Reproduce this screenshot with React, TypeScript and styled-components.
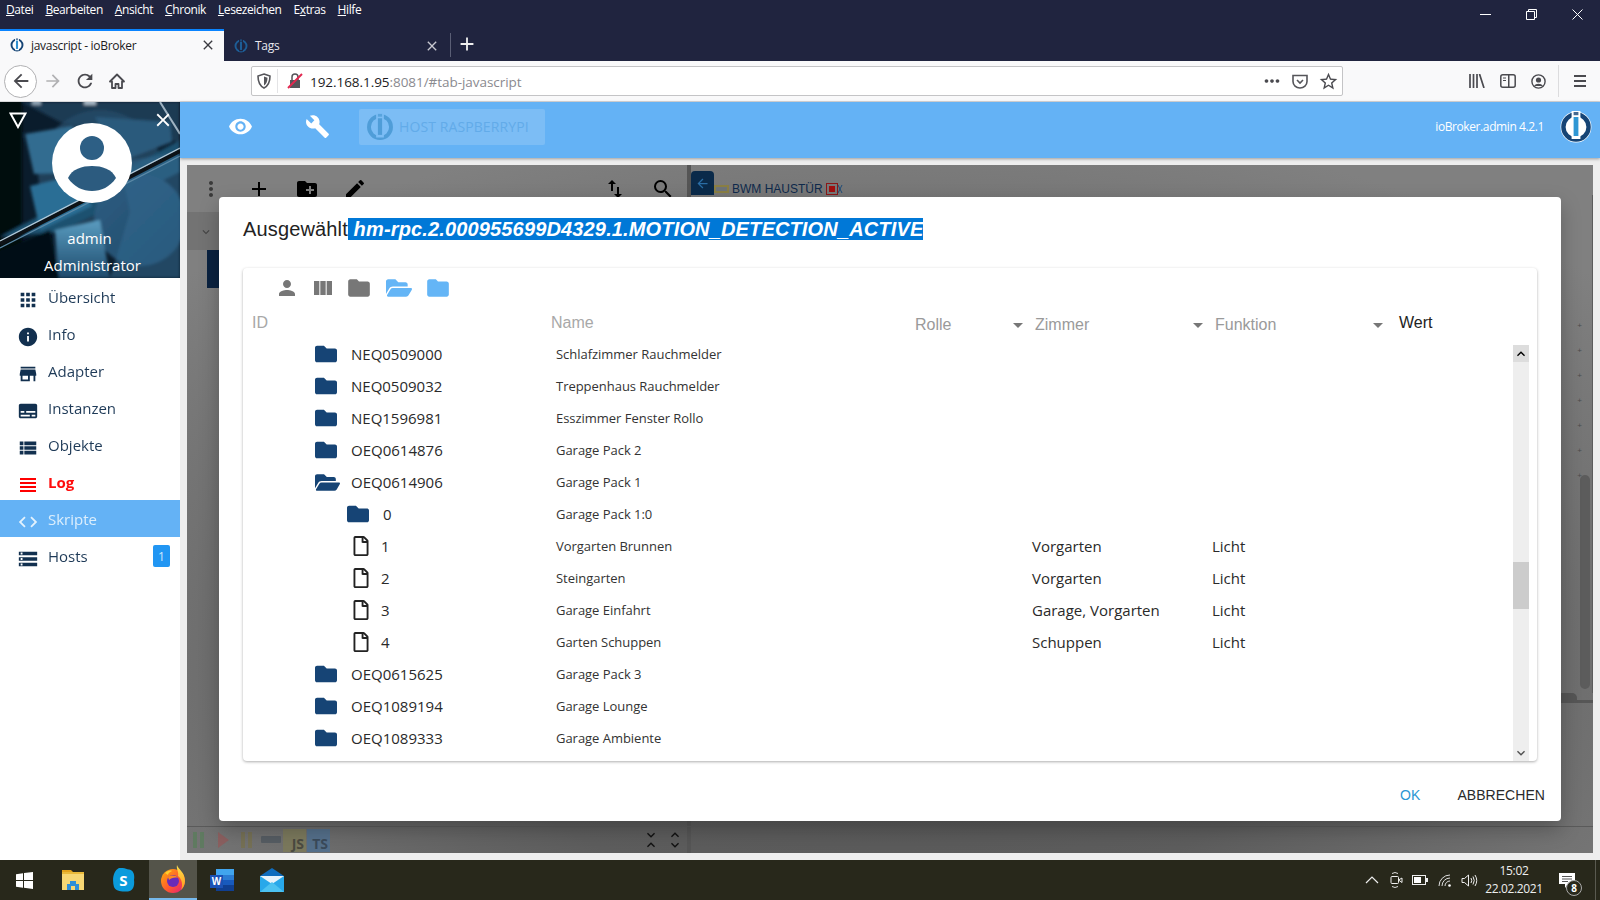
import React from "react";
import styled, { createGlobalStyle } from "styled-components";
import {
  MdApps, MdInfo, MdStore, MdSubtitles, MdViewList, MdCode, MdStorage, MdVisibility, MdBuild,
  MdAdd, MdCreateNewFolder, MdEdit, MdSearch, MdPerson, MdViewColumn, MdFolder, MdArrowDropDown,
  MdExpandMore, MdExpandLess, MdMoreVert, MdImportExport, MdClose, MdArrowBack, MdArrowForward, MdRefresh, MdMoreHoriz, MdStarBorder,
} from "react-icons/md";
import { FaFolder, FaFolderOpen, FaRegFile } from "react-icons/fa";

const Global = createGlobalStyle`
  html, body { margin: 0; padding: 0; width: 1600px; height: 900px; overflow: hidden; background: #eee; }
  * { box-sizing: border-box; }
  #root { width: 1600px; height: 900px; }
`;
const ui = `"Open Sans", "Noto Sans", sans-serif`;
const arial = `"Liberation Sans", Arial, sans-serif`;

const Page = styled.div`display:flex;flex-direction:column;width:1600px;height:900px;overflow:hidden;font-family:${ui};`;

/* ---------- browser chrome ---------- */
const TitleBar = styled.header`background:#20243f;height:61px;flex:none;display:flex;flex-direction:column;`;
const MenuRow = styled.div`height:29px;display:flex;align-items:flex-start;padding-left:6px;`;
const MenuItem = styled.span`font-size:12px;line-height:20px;color:#fff;margin-right:12px;letter-spacing:-.41px;`;
const WinControls = styled.div`margin-left:auto;display:flex;`;
const WinButton = styled.div`width:46px;height:28px;display:flex;align-items:center;justify-content:center;`;
const TabRow = styled.div`height:32px;display:flex;align-items:stretch;`;
const Tab = styled.div<{ $active?: boolean }>`
  width:${p => (p.$active ? 224 : 226)}px;display:flex;align-items:center;padding:${p => (p.$active ? "0 8px 2px 10px" : "1px 10px 0 10px")};
  background:${p => (p.$active ? "#f9f9fa" : "transparent")};
  border-top:${p => (p.$active ? "2px solid #0a84ff" : "0")};
  color:${p => (p.$active ? "#1c1b22" : "#e8e8ee")};
`;
const TabTitle = styled.span`font-size:12px;margin-left:7px;flex:1;letter-spacing:-.3px;`;
const TabSep = styled.div`width:1px;height:24px;background:#5a5e75;align-self:center;`;
const NewTab = styled.div`width:32px;display:flex;align-items:center;justify-content:center;color:#eee;padding-bottom:2px;`;

const NavBar = styled.nav`height:41px;flex:none;background:#f9f9fa;border-bottom:1px solid #d8d8da;display:flex;align-items:center;padding-left:4px;color:#4a4a4f;`;
const BackCircle = styled.div`width:33px;height:33px;border-radius:50%;border:1px solid #b1b1b3;background:#fff;display:flex;align-items:center;justify-content:center;flex:none;`;
const NavSlot = styled.div<{ $dim?: boolean; $w?: number }>`width:${p => p.$w || 32}px;height:32px;display:flex;align-items:center;justify-content:center;flex:none;color:${p => (p.$dim ? "#b1b1b3" : "#4a4a4f")};`;
const UrlBar = styled.div`margin-left:118px;width:1092px;height:30px;background:#fff;border:1px solid #c4c4c6;border-radius:2px;display:flex;align-items:center;padding-left:5px;flex:none;`;
const UrlSep = styled.div`width:1px;height:24px;background:#e4e4e6;margin:0 6px 0 6px;`;
const UrlText = styled.span`font-size:13.5px;color:#8a8a8f;margin-left:7px;letter-spacing:-.05px;flex:1;padding-top:2px;`;
const UrlHost = styled.span`color:#1c1b22;`;
const ChromeSep = styled.div`width:1px;height:32px;background:#dcdcde;margin:0 5px 0 4px;`;

/* ---------- app frame ---------- */
const Body = styled.div`flex:1;display:flex;min-height:0;`;
const Sidebar = styled.aside`width:180px;flex:none;background:#fff;display:flex;flex-direction:column;`;
const Hero = styled.div`position:relative;height:176px;display:flex;flex-direction:column;align-items:center;color:#fff;overflow:hidden;background:#06121e;`;
const HeroArt = styled.svg`position:absolute;inset:0;`;
const HeroTop = styled.div`position:relative;width:100%;height:100px;display:flex;justify-content:center;padding:21px 0 0 4px;`;
const HeroTriangle = styled.svg`position:absolute;left:9px;top:10px;`;
const HeroClose = styled.div`position:absolute;right:6px;top:7px;color:#fff;display:flex;`;
const HeroName = styled.div`position:relative;font-size:15px;line-height:27px;margin-top:23px;margin-left:-1px;`;
const HeroRole = styled.div`position:relative;font-size:15px;line-height:26px;margin-left:5px;`;
const MenuList = styled.ul`list-style:none;margin:0;padding:0;`;
const MenuRowItem = styled.li<{ $active?: boolean; $red?: boolean }>`
  height:37px;display:flex;align-items:center;position:relative;padding-left:17px;
  background:${p => (p.$active ? "#64b2f5" : "transparent")};
  color:${p => (p.$active ? "#e3f2fd" : p.$red ? "#f00" : "#12304f")};
`;
const MenuIcon = styled.span`width:22px;height:22px;display:flex;align-items:center;justify-content:center;margin-top:7px;flex:none;`;
const MenuLabel = styled.span<{ $bold?: boolean }>`margin-left:9px;font-size:15px;margin-top:1px;font-weight:${p => (p.$bold ? 700 : 400)};color:inherit;opacity:.95;`;
const Badge = styled.span`position:absolute;left:153px;top:8px;width:17px;height:22px;background:#2196f3;border-radius:2px;color:#cfe8fc;font-size:12px;display:flex;align-items:center;justify-content:center;`;

const Main = styled.main`flex:1;display:flex;flex-direction:column;background:#eee;min-width:0;`;
const AppHeader = styled.div`height:56px;flex:none;background:#64b2f5;box-shadow:0 1px 3px rgba(0,0,0,.35);display:flex;align-items:center;color:#fff;position:relative;padding:0 8px 7px 0;`;
const HeaderSlot = styled.div<{ $ml: number }>`width:48px;display:flex;justify-content:center;margin-left:${p => p.$ml}px;`;
const HostBox = styled.div`margin-left:18px;width:186px;height:36px;background:#7cbdf5;border-radius:2px;display:flex;align-items:center;padding-left:7px;`;
const HostText = styled.span`font-size:14px;color:#62abe9;margin-left:5px;letter-spacing:.1px;white-space:nowrap;`;
const Version = styled.span`margin-left:auto;margin-right:16px;font-size:12px;color:#fff;letter-spacing:-.4px;`;

const Content = styled.div`flex:1;padding:7px;min-height:0;`;
const ScriptArea = styled.section`
  position:relative;height:100%;display:flex;flex-direction:column;overflow:hidden;color:#000;
  background:radial-gradient(ellipse 70% 80% at 50% 72%, #555 0%, #5d5d5d 45%, #727272 75%, #808080 100%);
`;
const Upper = styled.div`flex:1;display:flex;min-height:0;`;
const LeftPane = styled.div`width:500px;flex:none;display:flex;flex-direction:column;`;
const ToolRow = styled.div`height:47px;display:flex;align-items:center;padding-left:8px;flex:none;`;
const ToolSlot = styled.div<{ $w: number; $ml?: number }>`width:${p => p.$w}px;margin-left:${p => p.$ml || 0}px;display:flex;justify-content:center;color:#000;`;
const Band = styled.div`height:38px;background:rgba(0,0,0,.1);padding:2px 0 0 12px;display:flex;align-items:center;flex:none;color:#444;`;
const ListStub = styled.div`width:24px;height:38px;margin-left:20px;background:#0a2240;flex:none;`;
const Splitter = styled.div`width:4px;background:#555;flex:none;`;
const RightPane = styled.div`flex:1;display:flex;flex-direction:column;min-width:0;`;
const EditorTabs = styled.div`height:30px;display:flex;align-items:flex-end;flex:none;`;
const BackTab = styled.div`width:23px;height:24px;background:#0a2a4a;border-radius:4px 4px 0 0;display:flex;align-items:center;justify-content:center;color:#2a6ea6;flex:none;`;
const DeviceTitle = styled.span`font-family:${arial};font-size:12px;color:#0f2a4c;margin:0 0 -1px 0;white-space:nowrap;display:flex;align-items:center;gap:3px;`;
const Editor = styled.div`flex:1;display:flex;justify-content:flex-end;min-height:0;position:relative;`;
const Gutter = styled.div`width:32px;display:flex;flex-direction:column;align-items:flex-end;padding-right:1px;border-right:1px solid #5c5c5c;`;
const GutterMarks = styled.div`margin-top:118px;width:100%;display:flex;flex-direction:column;align-items:flex-end;padding-right:9px;`;
const GutterMark = styled.span`font-size:8px;line-height:25px;height:25px;color:#4c4c4c;font-family:${arial};`;
const GutterThumb = styled.div`position:absolute;right:3px;top:280px;width:10px;height:214px;background:#5c5c5c;border-radius:5px;`;
const PanelEdge = styled.div`height:10px;flex:none;display:flex;flex-direction:column;align-items:flex-start;`;
const PanelTab = styled.div`height:7px;width:calc(100% - 16px);background:#555;border-radius:0 5px 0 0;`;
const PanelLine = styled.div`height:3px;width:100%;background:#565656;`;
const Lower = styled.div`height:123px;flex:none;`;
const BottomBar = styled.div`height:27px;flex:none;display:flex;border-top:1px solid #5a5a5a;align-items:stretch;`;
const BottomLeft = styled.div`width:500px;flex:none;display:flex;align-items:center;`;
const Glyph = styled.div`width:24px;display:flex;justify-content:center;`;
const Lang = styled.span<{ $bg: string; $fg: string }>`width:23px;height:23px;margin-right:1px;background:${p => p.$bg};color:${p => p.$fg};font:700 14px/1 ${ui};display:flex;align-items:flex-end;justify-content:flex-end;padding:0 2px 1px 0;`;
const Stepper = styled.div`margin-left:auto;display:flex;gap:0;`;
const StepCol = styled.div`width:24px;display:flex;flex-direction:column;align-items:center;color:#111;`;
const BottomSplit = styled.div`width:4px;background:#555;`;

/* ---------- dialog ---------- */
const Dialog = styled.div`
  position:absolute;left:32px;top:32px;width:1342px;height:624px;background:#fff;border-radius:4px;
  display:flex;flex-direction:column;padding:21px 24px 0;box-shadow:0 8px 20px rgba(0,0,0,.25);
`;
const DialogTitle = styled.h2`margin:0;height:22px;display:flex;align-items:center;font:400 20px/22px ${arial};color:#222;letter-spacing:.15px;white-space:pre;flex:none;`;
const Selected = styled.span`background:#0078d7;color:#fff;font-weight:700;font-style:italic;height:22px;line-height:22px;letter-spacing:.15px;`;
const Card = styled.div`margin-top:28px;height:493px;border-radius:4px;box-shadow:0 1px 3px rgba(0,0,0,.32);display:flex;flex-direction:column;flex:none;overflow:hidden;position:relative;`;
const CardTools = styled.div`height:36px;display:flex;align-items:center;padding:4px 0 0 26px;flex:none;`;
const CardTool = styled.div<{ $w: number; $color: string }>`width:${p => p.$w}px;display:flex;justify-content:center;color:${p => p.$color};`;
const HeaderRow = styled.div`height:41px;display:grid;grid-template-columns:299px 364px 120px 180px 180px 1fr;padding:0 0 2px 9px;align-items:center;flex:none;font:16px ${arial};`;
const HeadCell = styled.span<{ $dark?: boolean }>`color:${p => (p.$dark ? "#222" : "#a8a8a8")};margin:-2px 0 0 ${p => (p.$dark ? 4 : 0)}px;`;
const FilterCell = styled.div`display:flex;align-items:center;justify-content:space-between;color:#9a9a9a;font:16px ${arial};padding-right:10px;margin-top:2px;`;
const FilterArrow = styled.span`display:flex;color:#777;`;
const ListWrap = styled.div`flex:1;display:flex;min-height:0;`;
const List = styled.div`flex:1;overflow:hidden;margin-top:-7px;height:430px;`;
const Row = styled.div`height:32px;display:grid;grid-template-columns:313px 476px 180px 1fr;align-items:center;`;
const IdCell = styled.div<{ $level: number }>`display:flex;align-items:center;padding-left:${p => (p.$level === 2 ? 104 : 72)}px;font-size:15px;color:#2a2a2a;`;
const RowIcon = styled.span<{ $file?: boolean }>`display:flex;width:${p => (p.$file ? 30 : 36)}px;margin-left:${p => (p.$file ? 4 : 0)}px;color:${p => (p.$file ? "#222" : "#164475")};flex:none;`;
const NameCell = styled.div`font-size:13px;color:#333;letter-spacing:-.03px;`;
const PlainCell = styled.div`font-size:15px;color:#2a2a2a;`;
const Scroller = styled.div`width:16px;margin-right:8px;background:#eee;position:relative;display:flex;flex-direction:column;justify-content:space-between;flex:none;`;
const ScrollBtn = styled.div<{ $shade?: boolean }>`height:17px;display:flex;align-items:center;justify-content:center;background:${p => (p.$shade ? "#ddd" : "transparent")};color:${p => (p.$shade ? "#000" : "#505050")};`;
const ScrollThumb = styled.div`position:absolute;left:0;right:0;top:217px;height:47px;background:#ccc;`;
const Footer = styled.div`display:flex;justify-content:flex-end;align-items:center;height:36px;margin-top:16px;margin-right:-8px;font:14px ${arial};`;
const FootBtn = styled.span<{ $primary?: boolean }>`color:${p => (p.$primary ? "#2b97d4" : "#2a2a2a")};margin-left:${p => (p.$primary ? 0 : 37)}px;letter-spacing:.05px;`;

/* ---------- taskbar ---------- */
const TaskBar = styled.footer`height:40px;flex:none;background:#28281b;display:flex;align-items:stretch;position:relative;color:#fff;`;
const TaskSlot = styled.div<{ $active?: boolean; $w: number }>`
  width:${p => p.$w}px;display:flex;align-items:center;justify-content:center;
  background:${p => (p.$active ? "#54544a" : "transparent")};
  border-bottom:${p => (p.$active ? "2px solid #76b9ed" : "0")};
`;
const Tray = styled.div`margin-left:auto;display:flex;align-items:center;padding-right:4px;`;
const TraySlot = styled.div<{ $w: number }>`width:${p => p.$w}px;display:flex;justify-content:center;align-items:center;`;
const Clock = styled.div`width:72px;margin-left:-2px;text-align:center;font-size:12px;line-height:18px;color:#eee;letter-spacing:-.35px;`;
const Notify = styled.div`position:relative;width:49px;height:40px;margin-left:-3px;border-right:1px solid #5a5a50;display:flex;align-items:center;padding-left:12px;`;
const NotifyBadge = styled.span`position:absolute;left:19px;top:20px;width:16px;height:16px;border-radius:50%;background:#28281b;border:1px solid #aaa;color:#fff;font-size:10px;font-weight:700;display:flex;align-items:center;justify-content:center;`;
const SkypeS = styled.span`font:700 15px/1 ${ui};color:#fff;position:absolute;`;
const IconBox = styled.div`position:relative;display:flex;align-items:center;justify-content:center;`;
const WordW = styled.span`position:absolute;left:0;top:6px;width:13px;height:13px;background:#1b52b5;color:#fff;font:700 10px/13px ${arial};text-align:center;`;

/* ---------- drawings ---------- */
const Logo = ({ size, ring, bar, bg }: { size: number; ring: string; bar: string; bg: string }) => (
  <svg width={size} height={size} viewBox="0 0 32 32">
    <circle cx="16" cy="16" r="15.4" fill={bg} />
    <circle cx="16" cy="16" r="12.6" fill="none" stroke={ring} strokeWidth="4.4" />
    <rect x="11.6" y="0" width="8.8" height="28" fill={bg} />
    <rect x="13.6" y="6" width="4.8" height="19" fill={bar} />
    <rect x="13.6" y="1" width="4.8" height="3.2" fill={ring} opacity=".8" />
  </svg>
);

const HeroPicture = () => (
  <HeroArt width="180" height="176" viewBox="0 0 180 176">
    <defs>
      <linearGradient id="fin" x1="0" y1="0" x2="0" y2="1"><stop offset="0" stopColor="#5a9cc0" /><stop offset="1" stopColor="#1d4a6c" /></linearGradient>
      <linearGradient id="disk" x1="0" y1="0" x2="1" y2="1"><stop offset="0" stopColor="#2f5f83" /><stop offset="1" stopColor="#1d4767" /></linearGradient>
      <filter id="soft"><feGaussianBlur stdDeviation="1.6" /></filter>
    </defs>
    <rect width="180" height="176" fill="#0a1c2c" />
    <g filter="url(#soft)">
      <rect x="-4" y="-4" width="26" height="184" fill="#03090f" />
      <path d="M22 0H180V40L60 20Z" fill="#1d3a52" />
      <circle cx="100" cy="70" r="62" fill="#264c6a" opacity=".75" />
      <path d="M25 32L72 24L98 70L34 72Z" fill="#336c90" />
      <path d="M95 15L170 20L172 40L120 60Z" fill="#2a5a7c" />
      <rect x="32" y="-3" width="9" height="6" fill="#8ea2b2" />
      <rect x="84" y="-3" width="12" height="6" fill="#a5b6c3" />
      <path d="M0 135L180 38V70L60 130Z" fill="#1e5170" />
      <circle cx="140" cy="118" r="46" fill="url(#disk)" />
      <path d="M120 60L180 50V176H110L130 110Z" fill="#33698f" opacity=".55" />
      <path d="M30 84L72 74L92 104L40 128Z" fill="#2b6e95" />
      <path d="M55 128L100 118L110 176H58Z" fill="url(#fin)" />
      <path d="M-4 150L50 128L60 180H-4Z" fill="#040b12" />
    </g>
    <path d="M0 142L180 49" stroke="#0d1216" strokeWidth="4" />
    <path d="M0 139L180 46" stroke="#b7cbd8" strokeWidth="1.2" />
    <path d="M0 146L180 54" stroke="#5d8aa7" strokeWidth="1.2" />
    <path d="M160 0L180 32" stroke="#9fb3c2" strokeWidth="2" />
  </HeroArt>
);

const Avatar = () => (
  <svg width="80" height="80" viewBox="0 0 80 80" style={{ position: "relative" }}>
    <circle cx="40" cy="40" r="40" fill="#fff" />
    <circle cx="40" cy="25" r="12" fill="#2d5f85" />
    <path d="M16 55C20 46 30 43 40 43C50 43 60 46 64 55C58 64 49 68 40 68C31 68 22 64 16 55Z" fill="#2c5b7f" />
  </svg>
);

const LogIcon = () => (
  <svg width="18" height="16" viewBox="0 0 18 16"><path d="M1 1h16v2H1zM1 5h16v2H1zM1 9h16v2H1zM1 13h16v2H1z" fill="#f00" /></svg>
);

const Firefox = () => (
  <svg width="26" height="28" viewBox="0 0 26 28">
    <defs>
      <linearGradient id="ff" x1="0" y1="0" x2="1" y2="1"><stop offset="0" stopColor="#ffb00a" /><stop offset=".55" stopColor="#ff5a2c" /><stop offset="1" stopColor="#e31587" /></linearGradient>
      <linearGradient id="fy" x1="0" y1="0" x2="0" y2="1"><stop offset="0" stopColor="#ffe14d" /><stop offset="1" stopColor="#ff9a1a" /></linearGradient>
    </defs>
    <circle cx="13" cy="16" r="12" fill="url(#ff)" />
    <path d="M17 0C18 4 25 7 25 16C25 20 23 23 21 25C23 20 22 14 18 11C19 7 16 4 17 0Z" fill="url(#fy)" />
    <path d="M5 8C7 6 10 5 12 6C9 7 8 9 8 10Z" fill="#ffcf30" />
    <circle cx="13" cy="16" r="6" fill="#6a2bb8" />
    <path d="M8 12C11 10 16 10 18 13C15 12 11 13 9 15Z" fill="#ff8a20" />
  </svg>
);
const Explorer = () => (
  <svg width="22" height="22" viewBox="0 0 22 22">
    <path d="M0 1h9l2 2h-11z" fill="#e2a21c" />
    <rect y="3" width="22" height="18" fill="#f7d774" />
    <rect y="3" width="22" height="2" fill="#e9b93a" />
    <path d="M5 21v-6h3v-3h6v3h3v6h-4v-4h-4v4z" fill="#2f8fd8" />
  </svg>
);
const WordBack = () => (
  <svg width="24" height="22" viewBox="0 0 24 22">
    <rect x="6" y="0" width="18" height="6" fill="#41a5ee" />
    <rect x="6" y="6" width="18" height="5" fill="#2b7cd3" />
    <rect x="6" y="11" width="18" height="5" fill="#185abd" />
    <rect x="6" y="16" width="18" height="6" fill="#103f91" />
  </svg>
);
const Mail = () => (
  <svg width="24" height="24" viewBox="0 0 24 24">
    <path d="M0 8L12 0L24 8V24H0Z" fill="#0f6cbd" />
    <rect y="8" width="24" height="16" fill="#28a8ea" />
    <path d="M0 8H24L12 16Z" fill="#e8f3fb" />
    <path d="M0 24L12 14L24 24Z" fill="#4cc2f1" />
  </svg>
);

const stroke = { fill: "none", strokeWidth: 1.6 } as const;

const rows: { id: string; name: string; kind: "folder" | "open" | "file"; level: 1 | 2; room?: string; fn?: string }[] = [
  { id: "NEQ0509000", name: "Schlafzimmer Rauchmelder", kind: "folder", level: 1 },
  { id: "NEQ0509032", name: "Treppenhaus Rauchmelder", kind: "folder", level: 1 },
  { id: "NEQ1596981", name: "Esszimmer Fenster Rollo", kind: "folder", level: 1 },
  { id: "OEQ0614876", name: "Garage Pack 2", kind: "folder", level: 1 },
  { id: "OEQ0614906", name: "Garage Pack 1", kind: "open", level: 1 },
  { id: "0", name: "Garage Pack 1:0", kind: "folder", level: 2 },
  { id: "1", name: "Vorgarten Brunnen", kind: "file", level: 2, room: "Vorgarten", fn: "Licht" },
  { id: "2", name: "Steingarten", kind: "file", level: 2, room: "Vorgarten", fn: "Licht" },
  { id: "3", name: "Garage Einfahrt", kind: "file", level: 2, room: "Garage, Vorgarten", fn: "Licht" },
  { id: "4", name: "Garten Schuppen", kind: "file", level: 2, room: "Schuppen", fn: "Licht" },
  { id: "OEQ0615625", name: "Garage Pack 3", kind: "folder", level: 1 },
  { id: "OEQ1089194", name: "Garage Lounge", kind: "folder", level: 1 },
  { id: "OEQ1089333", name: "Garage Ambiente", kind: "folder", level: 1 },
  { id: "", name: "", kind: "folder", level: 1 },
];

const menu = [
  { label: "Übersicht", icon: <MdApps size={24} /> },
  { label: "Info", icon: <MdInfo size={24} /> },
  { label: "Adapter", icon: <MdStore size={24} /> },
  { label: "Instanzen", icon: <MdSubtitles size={24} /> },
  { label: "Objekte", icon: <MdViewList size={24} /> },
  { label: "Log", icon: <LogIcon />, red: true },
  { label: "Skripte", icon: <MdCode size={24} />, active: true },
  { label: "Hosts", icon: <MdStorage size={24} />, badge: "1" },
];

const marks = [0, 1, 2, 3, 4, 5, 6];

export default function App() {
  return (
    <Page>
      <Global />
      <TitleBar>
        <MenuRow>
          <MenuItem><u>D</u>atei</MenuItem>
          <MenuItem><u>B</u>earbeiten</MenuItem>
          <MenuItem><u>A</u>nsicht</MenuItem>
          <MenuItem><u>C</u>hronik</MenuItem>
          <MenuItem><u>L</u>esezeichen</MenuItem>
          <MenuItem>E<u>x</u>tras</MenuItem>
          <MenuItem><u>H</u>ilfe</MenuItem>
          <WinControls>
            <WinButton><svg width="11" height="11" viewBox="0 0 11 11"><path d="M0 5.5h11" stroke="#fff" /></svg></WinButton>
            <WinButton><svg width="11" height="11" viewBox="0 0 11 11"><path d="M.5 2.5h8v8h-8zM2.5 2.5v-2h8v8h-2" fill="none" stroke="#fff" /></svg></WinButton>
            <WinButton><svg width="11" height="11" viewBox="0 0 11 11"><path d="M.5.5l10 10M10.5.5l-10 10" stroke="#fff" /></svg></WinButton>
          </WinControls>
        </MenuRow>
        <TabRow>
          <Tab $active>
            <Logo size={14} ring="#164475" bar="#2f8fd0" bg="#fff" />
            <TabTitle>javascript - ioBroker</TabTitle>
            <MdClose size={16} color="#3a3a40" />
          </Tab>
          <Tab>
            <Logo size={14} ring="#1d5d96" bar="#1d5d96" bg="#20243f" />
            <TabTitle>Tags</TabTitle>
            <MdClose size={16} color="#c8c8d0" />
          </Tab>
          <TabSep />
          <NewTab><MdAdd size={22} /></NewTab>
        </TabRow>
      </TitleBar>

      <NavBar>
        <BackCircle><MdArrowBack size={22} /></BackCircle>
        <NavSlot $dim><MdArrowForward size={20} /></NavSlot>
        <NavSlot><MdRefresh size={22} /></NavSlot>
        <NavSlot><svg width="16" height="16" viewBox="0 0 16 16"><path d="M8 1.500L1 8.500h2V15h3.500v-4h3v4H13V8.500h2z" fill="none" stroke="#4a4a4f" strokeWidth="1.8" strokeLinejoin="round" /></svg></NavSlot>
        <UrlBar>
          <svg width="14" height="16" viewBox="0 0 14 16"><path d="M7 1L13 3C13 9 11 13 7 15C3 13 1 9 1 3Z" {...stroke} stroke="#55555a" /><path d="M7 3.5L10.5 4.7C10.5 8.5 9.3 11 7 12.5Z" fill="#55555a" /></svg>
          <UrlSep />
          <svg width="16" height="16" viewBox="0 0 16 16" style={{ marginLeft: 3 }}><rect x="3" y="7" width="10" height="8" fill="#55555a" /><path d="M5 7V4a3 3 0 016 0v3" fill="none" stroke="#55555a" strokeWidth="1.5" /><path d="M1 15L15 1" stroke="#e22850" strokeWidth="2" /></svg>
          <UrlText><UrlHost>192.168.1.95</UrlHost>:8081/#tab-javascript</UrlText>
          <NavSlot $w={28}><MdMoreHoriz size={22} /></NavSlot>
          <NavSlot $w={28}><svg width="16" height="15" viewBox="0 0 16 15"><path d="M1 1.5h14v6a7 6.5 0 01-14 0z" fill="none" stroke="#55555a" strokeWidth="1.6" /><path d="M5 6l3 3 3-3" fill="none" stroke="#55555a" strokeWidth="1.6" /></svg></NavSlot>
          <NavSlot $w={28}><MdStarBorder size={21} /></NavSlot>
        </UrlBar>
        <NavSlot $w={31} style={{ marginLeft: 118 }}><svg width="16" height="14" viewBox="0 0 16 14"><path d="M1 0v14M4.5 0v14M8 0v14M10.5 0l4.5 14" stroke="#4a4a4f" strokeWidth="1.7" /></svg></NavSlot>
        <NavSlot $w={31}><svg width="16" height="14" viewBox="0 0 16 14"><rect x=".8" y=".8" width="14.4" height="12.4" rx="2" fill="none" stroke="#4a4a4f" strokeWidth="1.5" /><rect x="8" y="1" width="1.5" height="12" fill="#4a4a4f" /><path d="M3 4h3M3 6.5h3" stroke="#4a4a4f" /></svg></NavSlot>
        <NavSlot $w={31}><svg width="15" height="15" viewBox="0 0 15 15"><circle cx="7.5" cy="7.5" r="6.6" fill="none" stroke="#4a4a4f" strokeWidth="1.4" /><circle cx="7.5" cy="6" r="2.6" fill="#4a4a4f" /><path d="M3 12a5 4 0 019 0z" fill="#4a4a4f" /></svg></NavSlot>
        <ChromeSep />
        <NavSlot><svg width="14" height="12" viewBox="0 0 14 12"><path d="M1 1h12M1 6h12M1 11h12" stroke="#4a4a4f" strokeWidth="1.8" /></svg></NavSlot>
      </NavBar>

      <Body>
        <Sidebar>
          <Hero>
            <HeroPicture />
            <HeroTop>
              <HeroTriangle width="18" height="17" viewBox="0 0 18 17"><path d="M1.5 1.5H16.5L9 15Z" fill="none" stroke="#fff" strokeWidth="2" /></HeroTriangle>
              <HeroClose><MdClose size={22} /></HeroClose>
              <Avatar />
            </HeroTop>
            <HeroName>admin</HeroName>
            <HeroRole>Administrator</HeroRole>
          </Hero>
          <MenuList>
            {menu.map(m => (
              <MenuRowItem key={m.label} $active={m.active} $red={m.red}>
                <MenuIcon>{m.icon}</MenuIcon>
                <MenuLabel $bold={m.red}>{m.label}</MenuLabel>
                {m.badge && <Badge>{m.badge}</Badge>}
              </MenuRowItem>
            ))}
          </MenuList>
        </Sidebar>

        <Main>
          <AppHeader>
            <HeaderSlot $ml={36}><MdVisibility size={25} /></HeaderSlot>
            <HeaderSlot $ml={29}><MdBuild size={25} /></HeaderSlot>
            <HostBox>
              <Logo size={28} ring="#4f9dd8" bar="#4f9dd8" bg="#7cbdf5" />
              <HostText>HOST RASPBERRYPI</HostText>
            </HostBox>
            <Version>ioBroker.admin 4.2.1</Version>
            <Logo size={32} ring="#164475" bar="#2f97d4" bg="#fff" />
          </AppHeader>
          <Content>
            <ScriptArea>
              <Upper>
                <LeftPane>
                  <ToolRow>
                    <ToolSlot $w={32}><MdMoreVert size={24} color="#3a3a3a" /></ToolSlot>
                    <ToolSlot $w={24} $ml={20}><MdAdd size={24} /></ToolSlot>
                    <ToolSlot $w={24} $ml={24}><MdCreateNewFolder size={24} /></ToolSlot>
                    <ToolSlot $w={24} $ml={24}><MdEdit size={24} /></ToolSlot>
                    <ToolSlot $w={24} $ml={236}><MdImportExport size={24} /></ToolSlot>
                    <ToolSlot $w={24} $ml={24}><MdSearch size={24} /></ToolSlot>
                  </ToolRow>
                  <Band><MdExpandMore size={14} /></Band>
                  <ListStub />
                </LeftPane>
                <Splitter />
                <RightPane>
                  <EditorTabs>
                    <BackTab><MdArrowBack size={15} /></BackTab>
                    <DeviceTitle>
                      <svg width="15" height="8" viewBox="0 0 15 8"><rect width="15" height="8" fill="#8a7f45" /><rect x="2" y="2" width="11" height="4" fill="#6f7478" /></svg>
                      BWM HAUSTÜR
                      <svg width="17" height="12" viewBox="0 0 17 12"><rect x=".5" y=".5" width="11" height="11" fill="none" stroke="#8a1818" /><rect x="3" y="3" width="6" height="6" fill="#a01010" /><path d="M12 2l4 8M16 2l-4 8" stroke="#1f4d78" /></svg>
                    </DeviceTitle>
                  </EditorTabs>
                  <Editor>
                    <Gutter>
                      <GutterMarks>
                        {marks.map(m => <GutterMark key={m}>+</GutterMark>)}
                      </GutterMarks>
                    </Gutter>
                    <GutterThumb />
                  </Editor>
                  <PanelEdge><PanelTab /><PanelLine /></PanelEdge>
                  <Lower />
                </RightPane>
              </Upper>
              <BottomBar>
                <BottomLeft>
                  <Glyph><svg width="12" height="18" viewBox="0 0 12 18"><path d="M0 1h4v16H0zM7 1h4v16H7z" fill="#5f7a60" /></svg></Glyph>
                  <Glyph><svg width="12" height="16" viewBox="0 0 12 16"><path d="M1 0l11 8-11 8z" fill="#8a5f5f" /></svg></Glyph>
                  <Glyph><svg width="12" height="18" viewBox="0 0 12 18"><path d="M0 1h4v16H0zM7 1h4v16H7z" fill="#757055" /></svg></Glyph>
                  <Glyph><svg width="20" height="10" viewBox="0 0 20 10"><rect width="20" height="7" y="1" rx="1" fill="#555c62" /></svg></Glyph>
                  <Lang $bg="#7a785c" $fg="#4a4a40">JS</Lang>
                  <Lang $bg="#546f8a" $fg="#3a4a5a">TS</Lang>
                  <Stepper>
                    <StepCol><MdExpandMore size={16} /><MdExpandLess size={16} style={{ marginTop: -6 }} /></StepCol>
                    <StepCol><MdExpandLess size={16} /><MdExpandMore size={16} style={{ marginTop: -6 }} /></StepCol>
                  </Stepper>
                </BottomLeft>
                <BottomSplit />
              </BottomBar>

              <Dialog>
                <DialogTitle>Ausgewählt<Selected> hm-rpc.2.000955699D4329.1.MOTION_DETECTION_ACTIVE</Selected></DialogTitle>
                <Card>
                  <CardTools>
                    <CardTool $w={36} $color="#777"><MdPerson size={24} /></CardTool>
                    <CardTool $w={36} $color="#777"><MdViewColumn size={24} /></CardTool>
                    <CardTool $w={35} $color="#777"><MdFolder size={26} /></CardTool>
                    <CardTool $w={46} $color="#64b5f6"><FaFolderOpen size={26} /></CardTool>
                    <CardTool $w={32} $color="#64b5f6"><MdFolder size={26} /></CardTool>
                  </CardTools>
                  <HeaderRow>
                    <HeadCell>ID</HeadCell>
                    <HeadCell>Name</HeadCell>
                    <FilterCell>Rolle<FilterArrow><MdArrowDropDown size={24} style={{ margin: "0 -5px" }} /></FilterArrow></FilterCell>
                    <FilterCell>Zimmer<FilterArrow><MdArrowDropDown size={24} style={{ margin: "0 -5px" }} /></FilterArrow></FilterCell>
                    <FilterCell>Funktion<FilterArrow><MdArrowDropDown size={24} style={{ margin: "0 -5px" }} /></FilterArrow></FilterCell>
                    <HeadCell $dark>Wert</HeadCell>
                  </HeaderRow>
                  <ListWrap>
                    <List>
                      {rows.map((r, i) => (
                        <Row key={i}>
                          <IdCell $level={r.level}>
                            <RowIcon $file={r.kind === "file"}>
                              {r.kind === "folder" && <FaFolder size={22} />}
                              {r.kind === "open" && <FaFolderOpen size={25} />}
                              {r.kind === "file" && <FaRegFile size={20} />}
                            </RowIcon>
                            {r.id}
                          </IdCell>
                          <NameCell>{r.name}</NameCell>
                          <PlainCell>{r.room}</PlainCell>
                          <PlainCell>{r.fn}</PlainCell>
                        </Row>
                      ))}
                    </List>
                    <Scroller>
                      <ScrollBtn $shade><MdExpandLess size={16} /></ScrollBtn>
                      <ScrollThumb />
                      <ScrollBtn><MdExpandMore size={16} /></ScrollBtn>
                    </Scroller>
                  </ListWrap>
                </Card>
                <Footer>
                  <FootBtn $primary>OK</FootBtn>
                  <FootBtn>ABBRECHEN</FootBtn>
                </Footer>
              </Dialog>
            </ScriptArea>
          </Content>
        </Main>
      </Body>

      <TaskBar>
        <TaskSlot $w={48}><svg width="17" height="17" viewBox="0 0 17 17"><path d="M0 2.3L7 1.3V8H0zM8 1.1L17 0V8H8zM0 9h7v6.7L0 14.7zM8 9h9v8l-9-1.2z" fill="#fff" /></svg></TaskSlot>
        <TaskSlot $w={50}><Explorer /></TaskSlot>
        <TaskSlot $w={51}>
          <IconBox>
            <svg width="22" height="24" viewBox="0 0 22 24"><path d="M6 0C11-.5 13 1 16 1.500C20 2 22 6 21 12C22 19 19 24 14 23.500C8 24 3 23 1 19C-1 12 0 3 6 0Z" fill="#0b9bdc" /></svg>
            <SkypeS>S</SkypeS>
          </IconBox>
        </TaskSlot>
        <TaskSlot $w={48} $active><Firefox /></TaskSlot>
        <TaskSlot $w={50}>
          <IconBox><WordBack /><WordW>W</WordW></IconBox>
        </TaskSlot>
        <TaskSlot $w={49}><Mail /></TaskSlot>
        <Tray>
          <TraySlot $w={24}><svg width="14" height="8" viewBox="0 0 14 8"><path d="M1 7l6-6 6 6" fill="none" stroke="#eee" strokeWidth="1.2" /></svg></TraySlot>
          <TraySlot $w={24}><svg width="13" height="18" viewBox="0 0 13 18"><rect x="1" y="5.500" width="7.500" height="7" rx="1" fill="none" stroke="#eee" /><path d="M8.500 9l3.500-2v4.500z" fill="none" stroke="#eee" /><path d="M2 2.500q3-2 6 0M2 15.500q3 2 6 0" fill="none" stroke="#ddd" /></svg></TraySlot>
          <TraySlot $w={24}><svg width="16" height="10" viewBox="0 0 16 10"><rect x=".5" y=".5" width="13" height="9" fill="none" stroke="#eee" /><rect x="2" y="2" width="7" height="6" fill="#fff" /><rect x="14" y="3" width="2" height="4" fill="#eee" /></svg></TraySlot>
          <TraySlot $w={26}><svg width="14" height="13" viewBox="0 0 14 13"><path d="M1 12a11 11 0 0111-11M4 12a8 8 0 018-8M7 12a5 5 0 015-5" fill="none" stroke="#ddd" /><circle cx="11.500" cy="11.500" r="1.300" fill="#fff" /></svg></TraySlot>
          <TraySlot $w={22}><svg width="17" height="13" viewBox="0 0 17 13"><path d="M1 4.500h2.500L7.500 1v11L3.500 8.500H1z" fill="none" stroke="#eee" /><path d="M10 4q1.500 2.500 0 5M12 2.500q2.500 4 0 8M14 1q3.500 5.500 0 11" fill="none" stroke="#eee" /></svg></TraySlot>
          <Clock>15:02<br />22.02.2021</Clock>
          <Notify>
            <svg width="16" height="15" viewBox="0 0 16 15"><path d="M0 0h16v11H9l-3 4v-4H0z" fill="#fff" /><path d="M3 3.500h10M3 6h10M3 8.500h6" stroke="#555" /></svg>
            <NotifyBadge>8</NotifyBadge>
          </Notify>
        </Tray>
      </TaskBar>
    </Page>
  );
}
